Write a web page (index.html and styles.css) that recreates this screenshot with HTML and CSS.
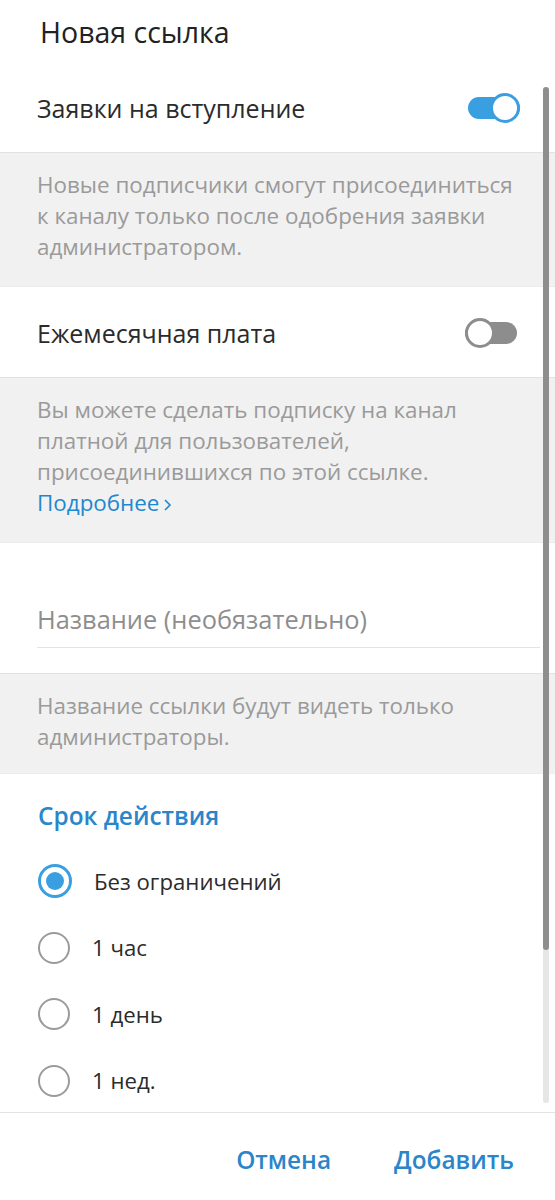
FILE: index.html
```html
<!DOCTYPE html>
<html lang="ru">

<head>
    <meta charset="UTF-8">
    <meta name="viewport" content="width=device-width, initial-scale=1.0">
    <title>Новая ссылка</title>

    <link rel="stylesheet" href="styles.css">
</head>

<body>
    <div class="box">
        <p class="box-title">Новая ссылка</p>

        <div class="scroll">
            <div class="row">
                <span>Заявки на вступление</span>
                <span class="toggle on"></span>
            </div>
            <div class="about">
                Новые подписчики смогут присоединиться<br>к каналу только после одобрения заявки<br>администратором.
            </div>

            <div class="row">
                <span>Ежемесячная плата</span>
                <span class="toggle off"></span>
            </div>
            <div class="about about-tall">
                Вы можете сделать подписку на канал<br>платной для пользователей,<br>присоединившихся по этой ссылке.<br>
                <a href="#" class="more">Подробнее<svg width="9" height="14" viewBox="0 0 9 14"><path d="M2 2l5 5-5 5" fill="none" stroke="currentColor" stroke-width="1.6"/></svg></a>
            </div>

            <div class="field">
                <div class="field-input">Название (необязательно)</div>
            </div>
            <div class="about about-short">
                Название ссылки будут видеть только<br>администраторы.
            </div>

            <div class="expire">
                <p class="expire-title">Срок действия</p>
                <label class="radio checked"><span class="dot"></span>Без ограничений</label>
                <label class="radio"><span class="dot"></span>1 час</label>
                <label class="radio"><span class="dot"></span>1 день</label>
                <label class="radio"><span class="dot"></span>1 нед.</label>
            </div>

            <div class="scrollbar">
                <div class="thumb"></div>
            </div>
        </div>

        <div class="buttons">
            <button type="button">Отмена</button>
            <button type="button">Добавить</button>
        </div>
    </div>
</body>

</html>
```

FILE: styles.css
```css
body,
html {
    padding: 0;
    margin: 0;
}

body {
    background-color: #fff;
    font-family: 'Open Sans', 'Noto Sans', sans-serif;
    color: #2b2b2b;
    overflow: hidden;
}

.box {
    width: 555px;
    height: 1200px;
    display: flex;
    flex-direction: column;
}

.box-title {
    margin: 0;
    height: 62px;
    padding-left: 40px;
    padding-top: 12px;
    box-sizing: border-box;
    font-size: 28.5px;
    line-height: 40px;
    font-weight: 500;
    color: #222;
}

.scroll {
    position: relative;
    height: 1050px;
    overflow: hidden;
}

.row {
    height: 90px;
    padding: 2px 35px 0 37px;
    box-sizing: border-box;
    display: flex;
    align-items: center;
    justify-content: space-between;
    font-size: 25px;
}

.toggle {
    position: relative;
    width: 52px;
    height: 22px;
    border-radius: 11px;
    background-color: #8d8d8d;
}

.toggle::after {
    content: '';
    position: absolute;
    top: -4px;
    left: 0;
    width: 24px;
    height: 24px;
    border-radius: 50%;
    background-color: #fff;
    border: 3px solid #8d8d8d;
}

.toggle.off {
    margin-right: 3px;
}

.toggle.on {
    background-color: #3a9fe0;
}

.toggle.on::after {
    left: auto;
    right: 0;
    border-color: #3a9fe0;
}

.about {
    background-color: #f1f1f1;
    border-top: 1px solid #e2e2e2;
    border-bottom: 1px solid #ececec;
    box-sizing: border-box;
    height: 135px;
    padding: 16px 20px 0 37px;
    font-size: 22.4px;
    line-height: 31px;
    color: #9a9a9a;
    white-space: nowrap;
}

.about-tall {
    height: 166px;
}

.about-short {
    height: 101px;
}

.more {
    color: #1e88cf;
    text-decoration: none;
}

.more svg {
    margin-left: 4px;
    vertical-align: -1px;
}

.field {
    height: 130px;
    padding: 59px 15px 0 37px;
    box-sizing: border-box;
}

.field-input {
    font-size: 25.4px;
    line-height: 34px;
    color: #8e8e8e;
    padding-bottom: 11px;
    border-bottom: 1px solid #e3e3e3;
}

.expire {
    padding: 24px 0 0 38px;
}

.expire-title {
    margin: 0 0 14px;
    font-size: 24.4px;
    line-height: 36px;
    font-weight: 600;
    color: #2a86c9;
}

.radio {
    display: flex;
    align-items: center;
    height: 66.5px;
    font-size: 22.2px;
    color: #2b2b2b;
}

.dot {
    width: 28px;
    height: 28px;
    border-radius: 50%;
    border: 2.5px solid #9b9b9b;
    margin-right: 22px;
    display: grid;
    place-content: center;
    flex-shrink: 0;
}

.radio.checked .dot {
    border-width: 3px;
    border-color: #3a9fe0;
}

.radio.checked .dot::after {
    content: '';
    width: 18px;
    height: 18px;
    border-radius: 50%;
    background-color: #3a9fe0;
}

.scrollbar {
    position: absolute;
    top: 25px;
    right: 6px;
    width: 6px;
    height: 1016px;
    border-radius: 3px;
    background-color: #e6e6e6;
}

.thumb {
    height: 863px;
    border-radius: 3px;
    background-color: #8e8e8e;
}

.buttons {
    flex: 1;
    border-top: 1px solid #e3e3e3;
    display: flex;
    justify-content: flex-end;
    align-items: flex-start;
    gap: 63px;
    padding: 30px 41px 0 0;
}

.buttons button {
    border: none;
    background: none;
    padding: 0;
    font-family: inherit;
    font-size: 24.4px;
    font-weight: 600;
    color: #2a86c9;
    cursor: pointer;
}
```
